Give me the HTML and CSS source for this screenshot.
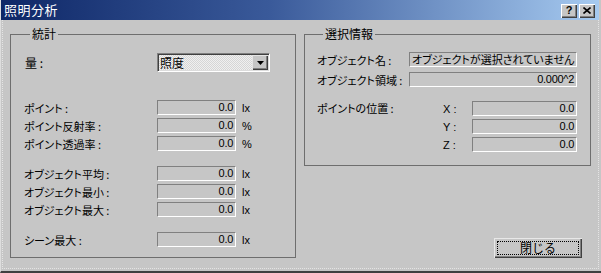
FILE: index.html
```html
<!DOCTYPE html>
<html lang="ja">
  <head>
    <meta charset="UTF-8" />
    <meta name="viewport" content="width=device-width, initial-scale=1.0" />
    <title>照明分析</title>
    <link rel="stylesheet" href="styles.css">
  </head>
  <body>
    <div class="window">
      <div class="titlebar">
        <span class="title">照明分析</span>
        <div class="caption-buttons">
          <button class="caption-btn help">?</button>
          <button class="caption-btn close">
            <svg width="8" height="7" viewBox="0 0 8 7">
              <path d="M0.5 0.5 L7.5 6.5 M7.5 0.5 L0.5 6.5" stroke="#000" stroke-width="1.6" fill="none" />
            </svg>
          </button>
        </div>
      </div>

      <div class="client">
        <!-- 統計 -->
        <fieldset class="group group-stats">
          <legend>統計</legend>

          <div class="row row-quantity">
            <span class="label">量 :</span>
            <div class="select">
              <span class="select-value">照度</span>
              <span class="select-arrow">
                <svg width="7" height="4" viewBox="0 0 7 4"><path d="M0 0 H7 L3.5 4 Z" fill="#000" /></svg>
              </span>
            </div>
          </div>

          <div class="block block-point">
            <div class="row">
              <span class="label">ポイント :</span>
              <span class="field num">0.0</span>
              <span class="unit">lx</span>
            </div>
            <div class="row">
              <span class="label">ポイント反射率 :</span>
              <span class="field num">0.0</span>
              <span class="unit">%</span>
            </div>
            <div class="row">
              <span class="label">ポイント透過率 :</span>
              <span class="field num">0.0</span>
              <span class="unit">%</span>
            </div>
          </div>

          <div class="block">
            <div class="row">
              <span class="label">オブジェクト平均 :</span>
              <span class="field num">0.0</span>
              <span class="unit">lx</span>
            </div>
            <div class="row">
              <span class="label">オブジェクト最小 :</span>
              <span class="field num">0.0</span>
              <span class="unit">lx</span>
            </div>
            <div class="row">
              <span class="label">オブジェクト最大 :</span>
              <span class="field num">0.0</span>
              <span class="unit">lx</span>
            </div>
          </div>

          <div class="block">
            <div class="row">
              <span class="label">シーン最大 :</span>
              <span class="field num">0.0</span>
              <span class="unit">lx</span>
            </div>
          </div>
        </fieldset>

        <div class="side">
          <!-- 選択情報 -->
          <fieldset class="group group-selection">
            <legend>選択情報</legend>

            <div class="sel-row">
              <span class="sel-label">オブジェクト名 :</span>
              <span class="field wide">オブジェクトが選択されていません</span>
            </div>
            <div class="sel-row">
              <span class="sel-label">オブジェクト領域 :</span>
              <span class="field wide num">0.000^2</span>
            </div>

            <div class="position">
              <span class="sel-label">ポイントの位置 :</span>
              <div class="axes">
                <div class="axis-row">
                  <span class="axis">X :</span>
                  <span class="field axis-field num">0.0</span>
                </div>
                <div class="axis-row">
                  <span class="axis">Y :</span>
                  <span class="field axis-field num">0.0</span>
                </div>
                <div class="axis-row">
                  <span class="axis">Z :</span>
                  <span class="field axis-field num">0.0</span>
                </div>
              </div>
            </div>
          </fieldset>

          <button class="close-btn"><span class="focus">閉じる</span></button>
        </div>
      </div>
    </div>
  </body>
</html>
```

FILE: styles.css
```css
body {
  margin: 0;
  padding: 0;
  background-color: #c6c6c6;
  font-family: "Noto Sans CJK JP", "Liberation Sans", sans-serif;
  font-feature-settings: "palt";
  color: #000;
}

.window {
  width: 601px;
  height: 273px;
  box-sizing: border-box;
  display: flex;
  flex-direction: column;
  background-color: #c6c6c6;
  padding: 0 0 2px 2px;
  border-left: 1px solid #dedede;
  border-bottom: 2px solid #404040;
  overflow: hidden;
}

/* Title bar */
.titlebar {
  height: 20px;
  flex: none;
  display: flex;
  align-items: center;
  justify-content: space-between;
  background: linear-gradient(to right, #0e2767, #3a5a9a 45%, #a6caf0);
  margin-left: -2px;
  padding: 0 4px 0 3px;
  width: 598px;
  box-sizing: border-box;
}

.title {
  color: #fff;
  font-size: 13px;
  line-height: 20px;
  letter-spacing: 0.5px;
}

.caption-buttons {
  display: flex;
  gap: 2px;
  margin-top: 1px;
}

.caption-btn {
  width: 16px;
  height: 14px;
  padding: 0;
  margin: 0;
  border: none;
  background-color: #c6c6c6;
  box-shadow: inset 1px 1px 0 #fff, inset -1px -1px 0 #404040, inset -2px -2px 0 #808080;
  font-family: "Liberation Sans", sans-serif;
  font-weight: bold;
  font-size: 11px;
  line-height: 13px;
  display: flex;
  align-items: center;
  justify-content: center;
}

/* Client area */
.client {
  flex: 1;
  display: flex;
  gap: 8px;
  padding: 7px 7px 10px 7px;
  width: 597px;
  box-sizing: border-box;
  border-right: 1px dotted #e4e4e4;
  border-bottom: 1px dotted #e4e4e4;
  border-left: 1px dotted #e4e4e4;
  margin-left: -1px;
}

.group {
  margin: 0;
  border: 1px solid #6e6e6e;
  width: 287px;
  box-sizing: border-box;
}

.group legend {
  font-size: 12px;
  line-height: 14px;
  padding: 0 2px;
  margin-left: 6px;
}

.group-stats {
  padding: 12px 0 0 13px;
}

.row {
  display: flex;
  align-items: center;
  height: 15px;
  font-size: 11px;
}

.block {
  display: flex;
  flex-direction: column;
  gap: 3px;
  margin-top: 15px;
}

.block-point {
  margin-top: 28px;
}

.label {
  width: 133px;
  flex: none;
  white-space: nowrap;
}

.row-quantity {
  height: 19px;
}

.row-quantity .label {
  font-size: 12px;
  padding-left: 1px;
  width: 132px;
}

/* Dropdown */
.select {
  width: 113px;
  height: 19px;
  box-sizing: border-box;
  display: flex;
  align-items: center;
  justify-content: space-between;
  border-top: 1px solid #808080;
  border-left: 1px solid #808080;
  border-right: 1px solid #fff;
  border-bottom: 1px solid #fff;
  box-shadow: inset 1px 1px 0 #404040, inset -1px -1px 0 #dcdcdc;
  background: repeating-conic-gradient(#f0f0f0 0 25%, #d6d6d6 0 50%) 0 0 / 2px 2px;
}

.select-value {
  font-size: 12px;
  padding-left: 2px;
  line-height: 15px;
}

.select-arrow {
  width: 16px;
  height: 15px;
  margin-right: 1px;
  box-sizing: border-box;
  display: flex;
  align-items: center;
  justify-content: center;
  background-color: #c6c6c6;
  box-shadow: inset 1px 1px 0 #e4e4e4, inset -1px -1px 0 #404040, inset -2px -2px 0 #808080;
}

/* Read-only fields */
.field {
  height: 15px;
  box-sizing: border-box;
  border-top: 1px solid #808080;
  border-left: 1px solid #808080;
  border-right: 1px solid #fff;
  border-bottom: 1px solid #fff;
  font-size: 11px;
  line-height: 13px;
  padding: 0 2px;
  white-space: nowrap;
  overflow: hidden;
}

.num {
  text-align: right;
  font-family: "Liberation Sans", sans-serif;
  font-size: 11px;
  letter-spacing: -0.3px;
}

.row .field {
  width: 79px;
}

.unit {
  margin-left: 6px;
  font-family: "Liberation Sans", sans-serif;
  font-size: 11px;
}

/* Right side */
.side {
  display: flex;
  flex-direction: column;
  justify-content: space-between;
  align-items: flex-end;
}

.group-selection {
  padding: 11px 0 13px 12px;
}

.sel-row {
  display: flex;
  align-items: center;
  height: 15px;
  font-size: 11px;
}

.sel-row + .sel-row {
  margin-top: 5px;
}

.sel-label {
  width: 92px;
  flex: none;
  font-size: 11px;
  white-space: nowrap;
}

.field.wide {
  width: 168px;
}

.position {
  display: flex;
  align-items: flex-start;
  margin-top: 14px;
  font-size: 11px;
}

.position .sel-label {
  line-height: 15px;
  width: 126px;
}

.axes {
  display: flex;
  flex-direction: column;
  gap: 3px;
}

.axis-row {
  display: flex;
  align-items: center;
  height: 15px;
}

.axis {
  width: 29px;
  font-family: "Liberation Sans", sans-serif;
  font-size: 11px;
}

.axis-field {
  width: 105px;
}

/* Close button */
.close-btn {
  width: 88px;
  height: 20px;
  margin: 0 9px 0 0;
  padding: 3px;
  border: none;
  background-color: #c6c6c6;
  box-shadow: inset 1px 1px 0 #e8e8e8, inset -1px -1px 0 #404040, inset -2px -2px 0 #808080;
  font-family: inherit;
  font-size: 12px;
  display: flex;
}

.focus {
  flex: 1;
  border: 1px dotted #000;
  line-height: 12px;
  text-align: center;
}
```
